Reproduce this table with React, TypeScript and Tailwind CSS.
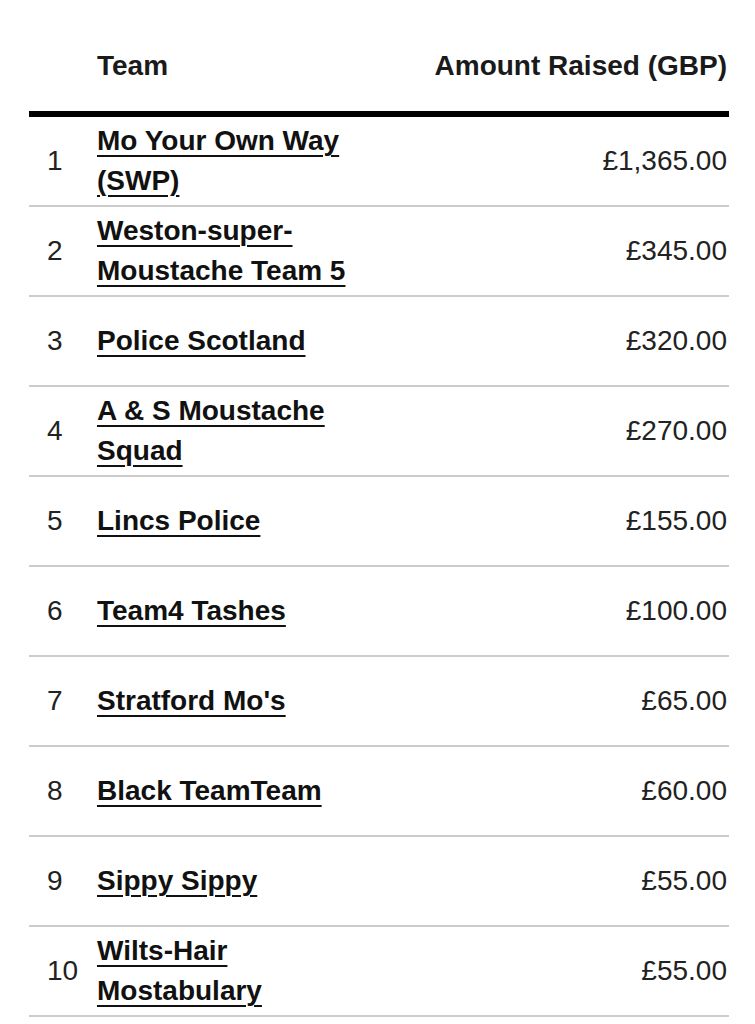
const teams = [
  { rank: 1, name: "Mo Your Own Way (SWP)", amount: "£1,365.00" },
  { rank: 2, name: "Weston-super-Moustache Team 5", amount: "£345.00" },
  { rank: 3, name: "Police Scotland", amount: "£320.00" },
  { rank: 4, name: "A & S Moustache Squad", amount: "£270.00" },
  { rank: 5, name: "Lincs Police", amount: "£155.00" },
  { rank: 6, name: "Team4 Tashes", amount: "£100.00" },
  { rank: 7, name: "Stratford Mo's", amount: "£65.00" },
  { rank: 8, name: "Black TeamTeam", amount: "£60.00" },
  { rank: 9, name: "Sippy Sippy", amount: "£55.00" },
  { rank: 10, name: "Wilts-Hair Mostabulary", amount: "£55.00" },
];

export default function App() {
  return (
    <main className="min-h-screen bg-white pt-[46px] pl-[29px] text-[28px] leading-[40px] text-[#1a1a1a] [font-family:'Liberation_Sans',Arial,sans-serif]">
      <div className="w-[700px]">
        {/* Header */}
        <div className="grid grid-cols-[68px_280px_1fr] border-b-[6px] border-black pb-[25px] font-bold">
          <div></div>
          <div>Team</div>
          <div className="pr-[2px] text-right whitespace-nowrap">Amount Raised (GBP)</div>
        </div>

        {/* Rows */}
        {teams.map((t) => (
          <div
            key={t.rank}
            className="grid h-[90px] grid-cols-[68px_280px_1fr] items-center border-b-2 border-[#cccccc] first:h-[89px]"
          >
            <div className="pl-[18px] text-[#222]">{t.rank}</div>
            <div>
              <a
                href="#"
                className="font-bold text-[#111] underline decoration-2 underline-offset-[5px]"
              >
                {t.name}
              </a>
            </div>
            <div className="pr-[2px] text-right text-[#222]">{t.amount}</div>
          </div>
        ))}
      </div>
    </main>
  );
}
